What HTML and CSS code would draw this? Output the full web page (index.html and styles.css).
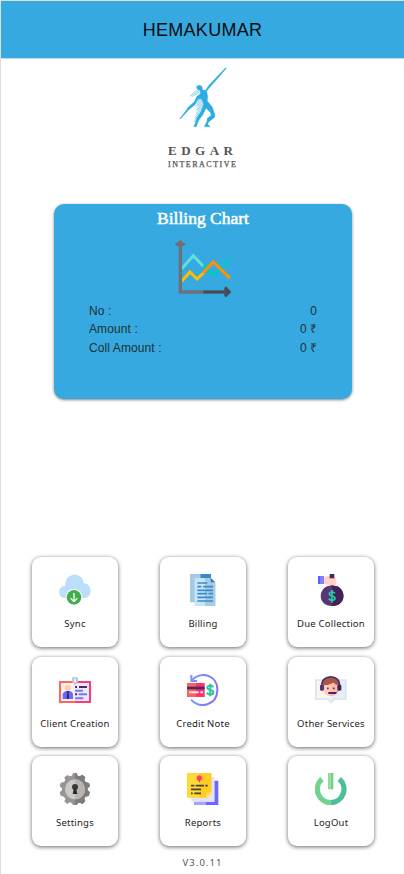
FILE: index.html
```html
<!DOCTYPE html>
<html lang="en">
<head>
<meta charset="utf-8">
<title>Edgar Interactive</title>
<link rel="stylesheet" href="styles.css">
</head>
<body>
<div class="app">
  <header class="topbar">HEMAKUMAR</header>
  <div class="brand">
    <svg class="brand-mark" viewBox="87 21 144 183">
      <defs>
        <pattern id="dots" width="5" height="5" patternUnits="userSpaceOnUse" patternTransform="rotate(35)"><rect width="5" height="3.2" fill="#8fd3ef"/></pattern>
      </defs>
      <path d="M146 84L117 109L125 107L120 113L139 104L148 99ZM146 114L132 128L136 133L141 129L137 140L144 139L137 151L143 150L137 161L140 163L133 174L136 176L130 185L136 187L133 193L139 193L164 148L162 120Z" fill="url(#dots)"/>
      <path d="M227 23L229 25L206 52L175 87L170 94L173 109L172 123L187 141L195 166L194 172L176 186L173 193L181 200L164 200L164 197L171 184L172 175L184 166L180 156L168 145L158 165L146 181L139 200L131 200L136 190L141 173L154 153L161 132L155 117L148 116L142 120L135 134L118 148L91 177L89 176L109 151L113 143L133 125L141 109L151 101L151 93L140 85C137 76 150 72 156 80L158 90L167 91L175 78L203 48Z" fill="#2bace2" stroke="#2bace2" stroke-width="1"/>
    </svg>
    <div class="brand-name">EDGAR</div>
    <div class="brand-sub">INTERACTIVE</div>
  </div>

  <section class="chart-card">
    <h2>Billing Chart</h2>
    <svg class="chart-icon" viewBox="27 12 174 177" fill="none">
      <path d="M50 101L85 62L117 96" stroke="#60dfdc" stroke-width="9"/>
      <path d="M115 91L145 122L195 73" stroke="#00c8c8" stroke-width="9"/>
      <path d="M50 139L75 111L96 132L117 112" stroke="#ffbd00" stroke-width="9"/>
      <path d="M114 114L145 81L195 130" stroke="#ff9100" stroke-width="9"/>
      <path d="M46 25V171H117" stroke="#6b7079" stroke-width="10"/>
      <path d="M115 171H182" stroke="#464d57" stroke-width="10"/>
      <path d="M46 15L62 28L57 33H34L29 28Z" fill="#6b7079"/>
      <path d="M199 171L183 187L178 183V158L183 154Z" fill="#464d57"/>
    </svg>
    <dl class="totals">
      <div><dt>No :</dt><dd>0</dd></div>
      <div><dt>Amount :</dt><dd>0 ₹</dd></div>
      <div><dt>Coll Amount :</dt><dd>0 ₹</dd></div>
    </dl>
  </section>

  <nav class="menu">
    <a class="tile">
      <svg viewBox="102 72 96 96">
        <path d="M118 144C96 142 98 108 120 107C119 66 174 64 176 100C202 99 204 142 179 144Z" fill="#bbdefb"/>
        <circle cx="147" cy="142" r="25" fill="#fff"/><circle cx="147" cy="142" r="22" fill="#43ac4b"/>
        <path d="M147 129V154M137 145L147 155L157 145" fill="none" stroke="#fff" stroke-width="4"/>
      </svg>
      <span>Sync</span>
    </a>
    <a class="tile">
      <svg viewBox="102 72 96 96">
        <path d="M111 72H142V157H111Z" fill="#a4cbdf"/><path d="M142 72H174V88H142Z" fill="#3d85cc"/>
        <path d="M125 84H173L187 98V168H125Z" fill="#c7e7f7"/><path d="M156 84H173L187 98V168H156Z" fill="#a5cce0"/>
        <path d="M173 83L187 97H173Z" fill="#3276bd"/>
        <path d="M133 99H163M133 110H145M150 110H180M133 121H180M133 131H162M167 131H180M133 142H180M133 153H180" stroke="#3e88ce" stroke-width="5"/>
      </svg>
      <span>Billing</span>
    </a>
    <a class="tile">
      <svg viewBox="102 72 96 96">
        <path d="M111 78H126V102H111Z" fill="#5c5cff"/><path d="M117 78H129V102H117Z" fill="#8080ff"/>
        <path d="M129 81L143 78L163 82L166 89V101Q165 108 153 108L141 104L129 101Z" fill="#ffd2c4"/>
        <path d="M146 72H160V85H146Z" fill="#4b2462"/>
        <path d="M139 109L153 105L166 109L163 116H143Z" fill="#68448a"/>
        <path d="M139 109C111 119 110 168 153 168C197 168 195 119 168 109Z" fill="#583573"/>
        <path d="M153 107L168 109C195 119 197 168 153 168Z" fill="#432255"/>
        <path d="M162 130C157 124 145 126 145 132C145 140 162 136 162 145C162 152 149 153 143 146M153 119V158" fill="none" stroke="#20cfa0" stroke-width="5"/>
      </svg>
      <span>Due Collection</span>
    </a>
    <a class="tile">
      <svg viewBox="102 72 96 96">
        <path d="M102 93H150V159H102Z" fill="#ff665c"/><path d="M150 93H198V159H150Z" fill="#ff3a72"/>
        <path d="M108 99H150V153H108Z" fill="#fff0eb"/><path d="M150 99H192V153H150Z" fill="#eee8f7"/>
        <path d="M113 147V133Q116 122 129 122T144 133V147Z" fill="#6b68ff"/>
        <circle cx="128" cy="113" r="9" fill="#ffc9b7"/><path d="M126 123H131L132 147H125Z" fill="#462562"/>
        <path d="M150 111H156M162 111H186M150 133H156" stroke="#4b2868" stroke-width="6"/>
        <path d="M150 122H174M161 133H186M150 145H175" stroke="#7776ff" stroke-width="6"/>
        <path d="M141 82H159V94Q158 101 150 105Q142 101 141 94Z" fill="#b9c9dc"/><path d="M147 86H153V97H147Z" fill="#e8f1f8"/>
      </svg>
      <span>Client Creation</span>
    </a>
    <a class="tile">
      <svg viewBox="102 72 96 96">
        <defs><linearGradient id="arc"><stop stop-color="#7896ff"/><stop offset="1" stop-color="#8570ff"/></linearGradient></defs>
        <path d="M115 92C145 60 195 76 193 121C191 165 142 179 114 149M115 75V93H132" fill="none" stroke="url(#arc)" stroke-width="6"/>
        <path d="M102 99H129V141H102Z" fill="#ff625d"/><path d="M129 99H155V141H129Z" fill="#fb336d"/>
        <path d="M102 110H155V118H102Z" fill="#4b2968"/>
        <path d="M108 127H137M142 127H150" stroke="#ffe4df" stroke-width="6"/>
        <path d="M181 112C176 104 163 106 163 113C163 121 181 117 181 127C181 136 166 136 161 128M172 101V139" fill="none" stroke="#24c99c" stroke-width="6"/>
      </svg>
      <span>Credit Note</span>
    </a>
    <a class="tile">
      <svg viewBox="102 72 96 96">
        <path d="M102 88H197V150H161L150 161L140 150H102Z" fill="#dbe6f1"/><path d="M107 93H150V153L143 145H107Z" fill="#fff3ef"/><path d="M150 93H192V145H157L150 152Z" fill="#e5edf6"/>
        <path d="M127 101H171V118Q170 137 149 138Q128 137 127 118Z" fill="#ffcdbb"/>
        <path d="M149 101H171V118Q170 137 149 138Z" fill="#ffb9a7"/>
        <path d="M125 106C121 75 177 75 174 106Q163 104 157 98Q144 106 125 106Z" fill="#a65943"/>
        <path d="M123 109C118 71 180 71 175 109" fill="none" stroke="#4d2865" stroke-width="5"/>
        <rect x="117" y="104" width="12" height="18" rx="4" fill="#5b3777"/><rect x="169" y="104" width="12" height="18" rx="4" fill="#432255"/>
        <path d="M173 119Q170 130 153 130" fill="none" stroke="#704b84" stroke-width="2"/>
        <path d="M138 115H143M156 115H161" stroke="#59316d" stroke-width="5"/><path d="M142 129H166" stroke="#4b2468" stroke-width="6"/>
      </svg>
      <span>Other Services</span>
    </a>
    <a class="tile">
      <svg viewBox="102 69 96 96">
        <path d="M144 69H155L158 77L164 79L172 74L181 82L178 91L182 96L192 99L195 109L188 115V121L195 127L191 138L181 140L178 145L181 154L172 162L164 158L158 160L155 166H144L141 160L134 157L126 162L118 154L121 146L117 140L107 137L104 127L111 121V115L104 109L107 98L117 96L121 91L118 82L127 75L134 79L141 77Z" fill="#999594"/>
        <path d="M150 69H155L158 77L164 79L172 74L181 82L178 91L182 96L192 99L195 109L188 115V121L195 127L191 138L181 140L178 145L181 154L172 162L164 158L158 160L155 166H150Z" fill="#817b7a"/>
        <circle cx="150" cy="118" r="30" fill="#cbcac9"/><path d="M150 88A30 30 0 0 1 150 148Z" fill="#b7b4b2"/>
        <circle cx="150" cy="111" r="9" fill="#393a3d"/><path d="M147 114H153L157 132H143Z" fill="#292b2f"/>
      </svg>
      <span>Settings</span>
    </a>
    <a class="tile">
      <svg viewBox="486 69 96 96">
        <path d="M508 155H568V92H580V166H508Z" fill="#6a68ff"/><path d="M508 155H543V166H508Z" fill="#a4a2ff"/>
        <path d="M499 81H568V155H499Z" fill="#e8e0f3"/>
        <path d="M486 69H559V127L543 143H486Z" fill="#ffda37"/><path d="M523 69H559V127L543 143H523Z" fill="#ffcc25"/>
        <path d="M543 143V134Q543 127 550 127H559Q557 139 543 143Z" fill="#ffe04c"/>
        <circle cx="523" cy="84" r="8" fill="#ff3f70"/><path d="M521 89H525V96H521Z" fill="#f13263"/>
        <path d="M498 107H508M512 107H537M541 107H548M498 118H528M498 130H503M508 130H528" stroke="#49402f" stroke-width="5"/>
      </svg>
      <span>Reports</span>
    </a>
    <a class="tile">
      <svg viewBox="102 69 96 96">
        <path d="M123 87A40.5 40.5 0 0 0 149 158" fill="none" stroke="#70d38f" stroke-width="16"/>
        <path d="M175 87A40.5 40.5 0 0 1 149 158" fill="none" stroke="#4dbf94" stroke-width="16"/>
        <path d="M141 69H149V118H141Z" fill="#91dc8f"/><path d="M149 69H157V118H149Z" fill="#72cf8b"/>
      </svg>
      <span>LogOut</span>
    </a>
  </nav>
  <footer class="version">V3.0.11</footer>
</div>
</body>
</html>
```
FILE: styles.css
```css
* { box-sizing: border-box; }
body {
  margin: 0;
  background: #fff;
  font-family: "Liberation Sans", Arial, sans-serif;
}
.app {
  height: 874px;
  border-top: 1px solid #dedede;
  border-left: 1px solid #dedede;
  display: flex;
  flex-direction: column;
  overflow: hidden;
}
svg { display: block; }
.topbar {
  height: 58px;
  flex: none;
  background: #36aae0;
  border-bottom: 1px solid #b5dff4;
  color: #080d10;
  font-size: 18px;
  letter-spacing: 0.3px;
  line-height: 58px;
  text-align: center;
}
.brand {
  height: 145px;
  flex: none;
  padding: 8px 0 0 167px;
  font-family: "Liberation Serif", "Times New Roman", serif;
  color: #555;
}
.brand-mark { width: 48px; height: 61px; margin-left: 11px; }
.brand-name {
  margin-top: 15px;
  font-size: 13px;
  font-weight: bold;
  line-height: 16px;
  letter-spacing: 4.5px;
}
.brand-sub {
  margin-top: 1px;
  font-size: 8px;
  line-height: 10px;
  letter-spacing: 1.5px;
  -webkit-text-stroke: 0.25px #555;
}
.chart-card {
  width: 298px;
  height: 195px;
  flex: none;
  margin-left: 53px;
  padding: 3px 35px 0;
  border-radius: 10px;
  background: #36aae0;
  box-shadow: 0 1px 3px rgba(0, 0, 0, 0.5);
}
.chart-card h2 {
  margin: 0;
  color: #fff;
  font: normal 17.5px/22px "Liberation Serif", "Times New Roman", serif;
  -webkit-text-stroke: 0.5px #fff;
  text-align: center;
}
.chart-icon { width: 58px; height: 59px; margin: 10px 0 0 85px; }
.totals {
  margin: 4px 0 0;
  color: #222e35;
  font-size: 12px;
  line-height: 18px;
}
.totals div { display: flex; justify-content: space-between; }
.totals div:last-child { margin-top: 1px; }
.totals dt { letter-spacing: 0.1px; }
.totals dd { margin: 0; }
.menu {
  display: grid;
  grid-template-columns: repeat(3, 86px);
  grid-auto-rows: 90px;
  gap: 9.5px 42px;
  margin: 158px 0 0 31px;
}
.tile {
  padding-top: 17px;
  border-radius: 9px;
  background: #fff;
  box-shadow: 0 1px 4px rgba(0, 0, 0, 0.6);
  display: flex;
  flex-direction: column;
  align-items: center;
}
.tile svg { width: 32px; height: 32px; }
.tile span {
  margin-top: 11px;
  color: #222;
  font: 9.5px/14px "Noto Sans", sans-serif;
  letter-spacing: 0.22px;
  white-space: nowrap;
}
.version {
  margin-top: 10px;
  color: #555;
  font: 9.5px/14px "Noto Sans", sans-serif;
  letter-spacing: 1.05px;
  text-align: center;
}
```
